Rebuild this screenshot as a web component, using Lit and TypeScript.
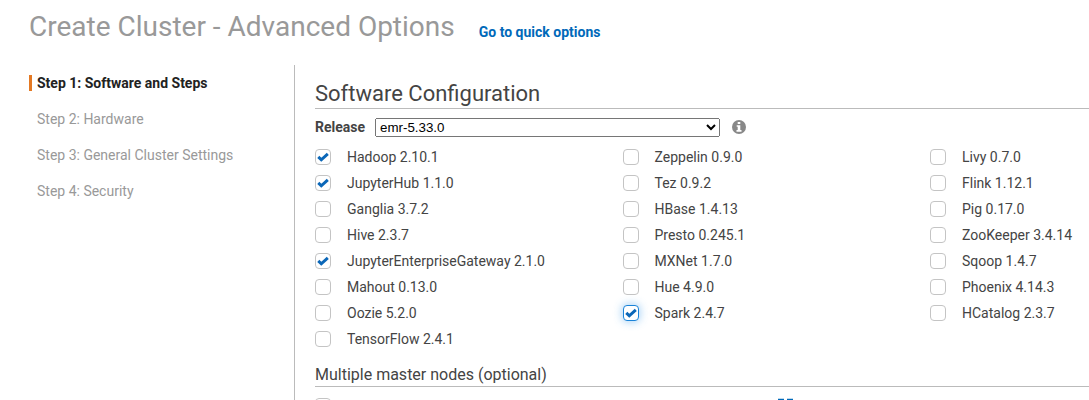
import { LitElement, html, css, nothing } from "lit";
import { customElement, property } from "lit/decorators.js";

@customElement("check-box")
class CheckBox extends LitElement {
  @property({ type: Boolean }) checked = false;
  @property({ type: Boolean }) focused = false;

  static styles = css`
    :host { display: block; width: 16px; height: 16px; flex: none; }
    .box {
      box-sizing: border-box; width: 16px; height: 16px;
      border: 1px solid #c4c4c4; border-radius: 4px; background: #fff;
    }
    .focused { border-color: #1a83d8; box-shadow: 0 0 8px 1px rgba(60, 155, 235, 0.45); }
    svg { display: block; width: 14px; height: 14px; }
  `;

  render() {
    return html`<div class="box ${this.focused ? "focused" : ""}">
      ${this.checked
        ? html`<svg viewBox="0 0 14 14"><path d="M2.3 6.9 L5.3 9.8 L11.8 3.9" fill="none" stroke="#0b67b8" stroke-width="3"/></svg>`
        : nothing}
    </div>`;
  }
}

interface App { name: string; checked?: boolean; focused?: boolean }

const STEPS = ["Step 1: Software and Steps", "Step 2: Hardware", "Step 3: General Cluster Settings", "Step 4: Security"];

const COLUMNS: App[][] = [
  [
    { name: "Hadoop 2.10.1", checked: true },
    { name: "JupyterHub 1.1.0", checked: true },
    { name: "Ganglia 3.7.2" },
    { name: "Hive 2.3.7" },
    { name: "JupyterEnterpriseGateway 2.1.0", checked: true },
    { name: "Mahout 0.13.0" },
    { name: "Oozie 5.2.0" },
    { name: "TensorFlow 2.4.1" },
  ],
  [
    { name: "Zeppelin 0.9.0" },
    { name: "Tez 0.9.2" },
    { name: "HBase 1.4.13" },
    { name: "Presto 0.245.1" },
    { name: "MXNet 1.7.0" },
    { name: "Hue 4.9.0" },
    { name: "Spark 2.4.7", checked: true, focused: true },
  ],
  [
    { name: "Livy 0.7.0" },
    { name: "Flink 1.12.1" },
    { name: "Pig 0.17.0" },
    { name: "ZooKeeper 3.4.14" },
    { name: "Sqoop 1.4.7" },
    { name: "Phoenix 4.14.3" },
    { name: "HCatalog 2.3.7" },
  ],
];

@customElement("app-root")
class AppRoot extends LitElement {
  static styles = css`
    :host {
      display: block; height: 400px; overflow: hidden; background: #fff;
      font: 14px/20px Roboto, sans-serif; color: #444;
    }
    .header { display: flex; align-items: flex-start; gap: 24px; height: 65px; padding-left: 29px; box-sizing: border-box; padding-top: 9px; }
    .title { margin: 0; font-size: 28px; line-height: 36px; font-weight: 400; color: #999; white-space: nowrap; }
    .quick { margin-top: 13px; color: #0069b9; font-weight: 700; text-decoration: none; white-space: nowrap; }
    .body { display: flex; height: 335px; }
    .nav { width: 294px; flex: none; box-sizing: border-box; padding: 10px 0 0 29px; display: flex; flex-direction: column; gap: 20px; }
    .step { height: 16px; line-height: 16px; padding-left: 5px; border-left: 3px solid transparent; color: #999; }
    .current { border-left-color: #e47923; color: #222; font-weight: 700; }
    .main { flex: 1; min-width: 0; border-left: 1px solid #bbb; padding: 14px 0 0 20px; }
    .section { margin: 0; height: 29px; line-height: 29px; font-size: 22px; font-weight: 400; border-bottom: 1px solid #bbb; }
    .release { display: flex; align-items: center; height: 20px; margin-top: 8px; }
    .release label { width: 60px; font-weight: 700; }
    .release select { width: 345px; height: 19px; margin: 0; font: 13.333px "Liberation Sans", sans-serif; }
    .info { width: 14px; height: 14px; margin-left: 12px; }
    .apps { display: grid; grid-template-columns: repeat(3, 307.5px); margin-top: 7px; height: 208px; }
    .app { display: flex; align-items: center; gap: 16px; height: 26px; white-space: nowrap; }
    .sub { margin: 11px 0 0; height: 23px; line-height: 23px; font-size: 16px; font-weight: 400; border-bottom: 1px solid #bbb; }
    .master { display: flex; margin-top: 11px; }
    .external { width: 15px; height: 14px; margin-left: 447px; }
  `;

  render() {
    return html`
      <header class="header">
        <h1 class="title">Create Cluster - Advanced Options</h1>
        <a class="quick" href="#">Go to quick options</a>
      </header>
      <div class="body">
        <nav class="nav">
          ${STEPS.map((s, i) => html`<div class="step ${i === 0 ? "current" : ""}">${s}</div>`)}
        </nav>
        <main class="main">
          <h2 class="section">Software Configuration</h2>
          <div class="release">
            <label for="release">Release</label>
            <select id="release"><option>emr-5.33.0</option></select>
            <svg class="info" viewBox="0 0 14 14">
              <circle cx="7" cy="7" r="7" fill="#888"/>
              <path d="M5.7 1.9h2.6v2.2H5.7zM4.7 5.2h3.6v4.9h1.2v1.7h-5v-1.7h1.2V6.8h-1z" fill="#fff"/>
            </svg>
          </div>
          <div class="apps">
            ${COLUMNS.map((col) => html`<div>
              ${col.map((a) => html`<div class="app">
                <check-box ?checked=${a.checked} ?focused=${a.focused}></check-box><span>${a.name}</span>
              </div>`)}
            </div>`)}
          </div>
          <h3 class="sub">Multiple master nodes (optional)</h3>
          <div class="master">
            <check-box></check-box>
            <svg class="external" viewBox="0 0 15 14"><path d="M6 1.7H1v11.3h12V9.7M9 1.7h5v5M14 1.7L7 8.7" fill="none" stroke="#0069b9" stroke-width="2"/></svg>
          </div>
        </main>
      </div>`;
  }
}
